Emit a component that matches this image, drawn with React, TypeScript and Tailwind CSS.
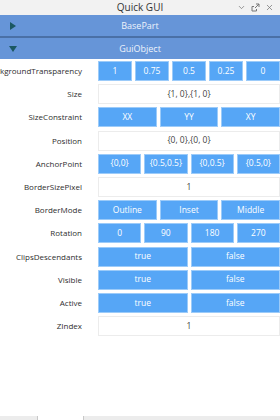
import { ChevronDown, X } from "lucide-react";

type Row =
    | { label: string; kind: "buttons"; options: string[] }
    | { label: string; kind: "value"; value: string };

const rows: Row[] = [
    { label: "BackgroundTransparency", kind: "buttons", options: ["1", "0.75", "0.5", "0.25", "0"] },
    { label: "Size", kind: "value", value: "{1, 0},{1, 0}" },
    { label: "SizeConstraint", kind: "buttons", options: ["XX", "YY", "XY"] },
    { label: "Position", kind: "value", value: "{0, 0},{0, 0}" },
    { label: "AnchorPoint", kind: "buttons", options: ["{0,0}", "{0.5,0.5}", "{0,0.5}", "{0.5,0}"] },
    { label: "BorderSizePixel", kind: "value", value: "1" },
    { label: "BorderMode", kind: "buttons", options: ["Outline", "Inset", "Middle"] },
    { label: "Rotation", kind: "buttons", options: ["0", "90", "180", "270"] },
    { label: "ClipsDescendants", kind: "buttons", options: ["true", "false"] },
    { label: "Visible", kind: "buttons", options: ["true", "false"] },
    { label: "Active", kind: "buttons", options: ["true", "false"] },
    { label: "ZIndex", kind: "value", value: "1" },
];

const FloatIcon = () => (
    <svg width="9" height="9" viewBox="0 0 9 9" fill="none" stroke="#777" strokeWidth="1">
        <path d="M1 3.5v4.5h4.5" />
        <path d="M1 3.5h2M5.5 8V6" />
        <path d="M4 5L8 1M5 1h3v3" />
    </svg>
);

const Header = ({ title, open }: { title: string; open: boolean }) => (
    <div className="relative h-[21px] bg-[#6695d8] flex items-center justify-center">
        <svg className="absolute left-[9px]" width="8" height="8" viewBox="0 0 8 8">
            {open ? <path d="M0 1h8L4 7z" fill="#1b5862" /> : <path d="M1 0v8l6-4z" fill="#1b5862" />}
        </svg>
        <span className="text-[9px] text-[#eef3fb]">{title}</span>
    </div>
);

export default function App() {
    return (
        <div
            className="w-[280px] h-[420px] overflow-hidden bg-white flex flex-col"
            style={{ fontFamily: '"Open Sans", "Noto Sans", sans-serif' }}
        >
            {/* title bar */}
            <div className="relative h-[15px] bg-[#f2f2f2] flex items-center justify-center shrink-0">
                <span className="text-[10px] text-[#333]">Quick GUI</span>
                <div className="absolute right-[6px] top-0 h-full flex items-center gap-[5px]">
                    <ChevronDown size={9} color="#777" strokeWidth={2} />
                    <FloatIcon />
                    <X size={9} color="#777" strokeWidth={2} />
                </div>
            </div>

            <Header title="BasePart" open={false} />
            <div className="h-[2px] bg-[#4a70a6]" />
            <Header title="GuiObject" open={true} />

            <div className="flex flex-col gap-[3.2px] pt-[2px]">
                {rows.map((row) => (
                    <div key={row.label} className="flex items-center h-[20px]">
                        <div className="w-[82px] shrink-0 flex justify-end whitespace-nowrap text-[8px] font-medium text-[#2e2e2e]">
                            {row.label}
                        </div>
                        <div className="ml-[16px] w-[182px] shrink-0 h-full flex gap-[3px]">
                            {row.kind === "buttons" ? (
                                row.options.map((opt) => (
                                    <div
                                        key={opt}
                                        className="flex-1 flex items-center justify-center bg-[#56a6f6] border border-[#9ccbf9] text-[8.5px] text-white"
                                    >
                                        {opt}
                                    </div>
                                ))
                            ) : (
                                <div className="flex-1 flex items-center justify-center border border-[#ececec] text-[8.5px] text-[#444]">
                                    {row.value}
                                </div>
                            )}
                        </div>
                    </div>
                ))}
            </div>

            <div className="flex-1" />

            {/* bottom tab strip */}
            <div className="h-[4px] flex shrink-0">
                <div className="w-[38px] bg-[#ececec] border-r border-[#c8c8c8]" />
                <div className="w-[46px] bg-white border-r border-[#c8c8c8]" />
                <div className="flex-1 bg-[#ececec]" />
            </div>
        </div>
    );
}
